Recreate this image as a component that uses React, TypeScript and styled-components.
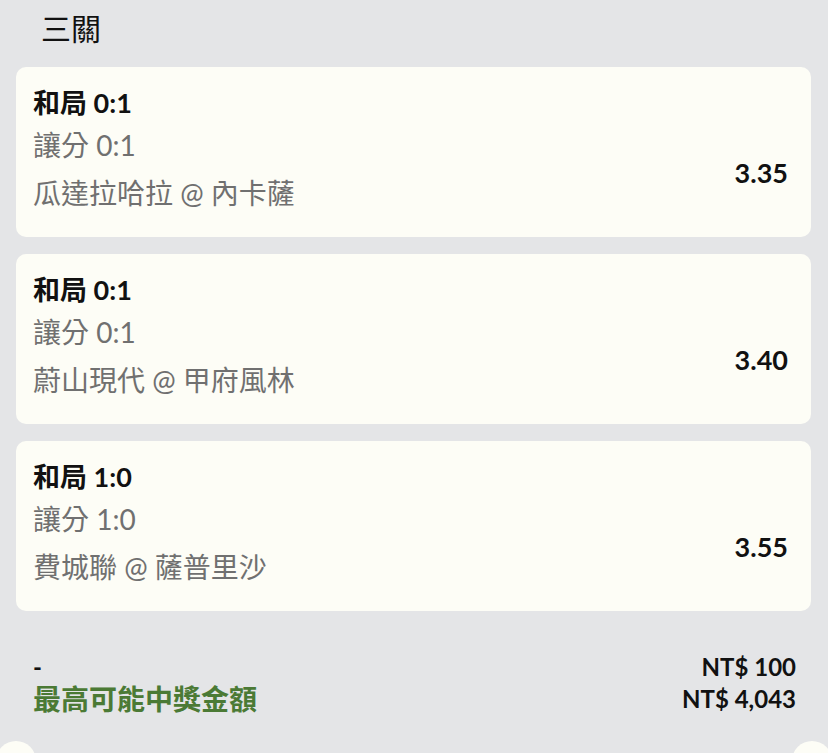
import React from 'react'
import styled, { createGlobalStyle } from 'styled-components'

interface Leg {
  id: number
  pick: string
  market: string
  match: string
  odds: string
}

const LEGS: Leg[] = [
  { id: 1, pick: '和局 0:1', market: '讓分 0:1', match: '瓜達拉哈拉 @ 內卡薩', odds: '3.35' },
  { id: 2, pick: '和局 0:1', market: '讓分 0:1', match: '蔚山現代 @ 甲府風林', odds: '3.40' },
  { id: 3, pick: '和局 1:0', market: '讓分 1:0', match: '費城聯 @ 薩普里沙', odds: '3.55' },
]

const GlobalStyle = createGlobalStyle`
  html, body {
    margin: 0;
    padding: 0;
    background: #e4e5e7;
    overflow: hidden;
  }
  body {
    font-family: Lato, 'Noto Sans CJK TC', sans-serif;
    color: #111;
  }
`

const App: React.FC = () => {
  return (
    <Page>
      <GlobalStyle />
      <Title>三關</Title>

      <CardList>
        {LEGS.map((leg) => (
          <Card key={leg.id}>
            <Info>
              <Pick>{leg.pick}</Pick>
              <SubText $gap={7}>{leg.market}</SubText>
              <SubText $gap={12}>{leg.match}</SubText>
            </Info>
            <Odds>{leg.odds}</Odds>
          </Card>
        ))}
      </CardList>

      {/* summary */}
      <Summary>
        <SummaryRow>
          <Dash>-</Dash>
          <Amount>NT$ 100</Amount>
        </SummaryRow>
        <SummaryRow>
          <PayoutLabel>最高可能中獎金額</PayoutLabel>
          <Amount>NT$ 4,043</Amount>
        </SummaryRow>
      </Summary>

      <NotchRow>
        <Notch />
        <Notch />
      </NotchRow>
    </Page>
  )
}

export default App

const Page = styled.div`
  width: 828px;
  display: flex;
  flex-direction: column;
`

const Title = styled.h1`
  margin: 0;
  padding: 10px 0 0 41px;
  height: 56px;
  box-sizing: border-box;
  font-size: 30px;
  font-weight: 400;
  line-height: 36px;
  color: #111;
`

const CardList = styled.div`
  display: flex;
  flex-direction: column;
  gap: 17px;
  padding: 11px 17px 0 16px;
`

const Card = styled.div`
  height: 170px;
  box-sizing: border-box;
  background: #fdfdf6;
  border-radius: 10px;
  display: flex;
  align-items: center;
  justify-content: space-between;
  padding: 19px 23px 0 17px;
`

const Info = styled.div`
  display: flex;
  flex-direction: column;
  align-self: flex-start;
`

const Pick = styled.div`
  font-size: 27px;
  font-weight: 700;
  line-height: 34px;
  color: #111;
`

const SubText = styled.div<{ $gap: number }>`
  font-size: 28px;
  font-weight: 400;
  line-height: 36px;
  color: #707070;
  margin-top: ${(props) => props.$gap}px;
`

const Odds = styled.div`
  font-size: 27px;
  font-weight: 700;
  line-height: 34px;
  color: #111;
  margin-top: 22px;
`

const Summary = styled.div`
  display: flex;
  flex-direction: column;
  padding: 39px 32px 0 33px;
`

const SummaryRow = styled.div`
  display: flex;
  justify-content: space-between;
  align-items: center;
  height: 32px;
`

const Dash = styled.span`
  font-size: 24px;
  font-weight: 700;
  color: #111;
`

const PayoutLabel = styled.span`
  font-size: 28px;
  font-weight: 700;
  color: #4b7a35;
`

const Amount = styled.span`
  font-size: 24px;
  font-weight: 700;
  color: #111;
`

const NotchRow = styled.div`
  display: flex;
  justify-content: space-between;
  margin: 27px -4px 0 -4px;
`

const Notch = styled.div`
  width: 40px;
  height: 40px;
  flex-shrink: 0;
  border-radius: 50%;
  background: #fdfdf6;
`
